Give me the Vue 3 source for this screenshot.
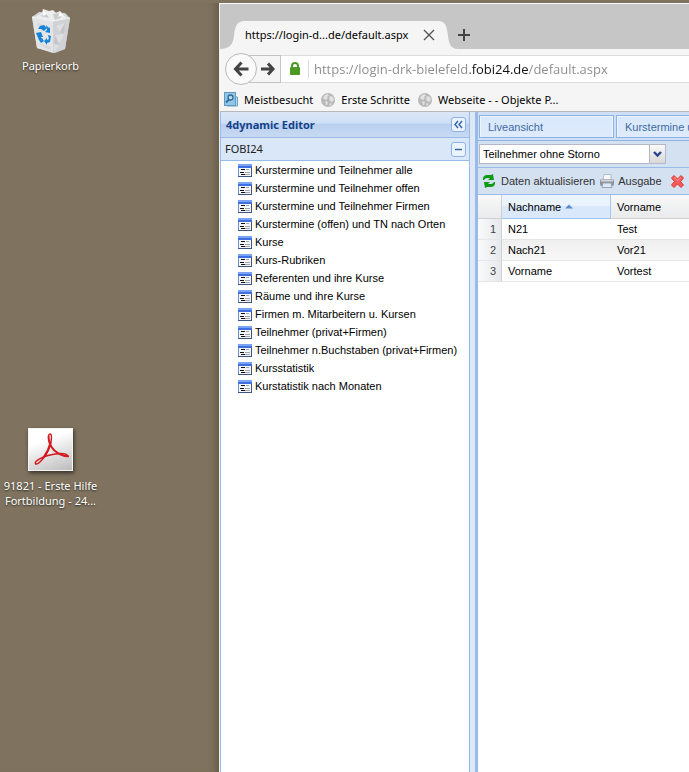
<script setup>
import { ref } from 'vue'

const address = ref('https://login-drk-bielefeld.fobi24.de/default.aspx')
const view = ref('Teilnehmer ohne Storno')
const entries = [
  'Kurstermine und Teilnehmer alle',
  'Kurstermine und Teilnehmer offen',
  'Kurstermine und Teilnehmer Firmen',
  'Kurstermine (offen) und TN nach Orten',
  'Kurse',
  'Kurs-Rubriken',
  'Referenten und ihre Kurse',
  'Räume und ihre Kurse',
  'Firmen m. Mitarbeitern u. Kursen',
  'Teilnehmer (privat+Firmen)',
  'Teilnehmer n.Buchstaben (privat+Firmen)',
  'Kursstatistik',
  'Kurstatistik nach Monaten'
]
const bookmarks = ['Erste Schritte', 'Webseite - - Objekte P...']
const people = [
  { last: 'N21', first: 'Test' },
  { last: 'Nach21', first: 'Vor21' },
  { last: 'Vorname', first: 'Vortest' }
]
</script>

<template>
  <div class="desktop">
    <div class="shortcuts">
      <a class="shortcut bin" href="#">
        <svg width="44" height="46" viewBox="0 0 44 46">
          <path d="M3 9 L10 4 L36 5 L41 10 L36 41 L26 45 L8 40 Z" fill="#d3d5d8" />
          <path d="M3 9 L24 13 L24 45 L8 40 Z" fill="#e3e4e6" />
          <path d="M24 13 L41 10 L36 41 L24 45 Z" fill="#d0d2d5" />
          <path d="M6 9 L13 5 L14 1 L20 3 L24 2 L27 5 L31 3 L34 6 L38 10 L25 13 Z" fill="#eceded" />
          <path d="M11 8 L17 5 L20 10 Z M24 6 L31 5 L32 10 L26 12 Z" fill="#c9cbcd" />
          <path d="M14 2 L18 6 L14 8 Z M31 4 L34 7 L29 9 Z" fill="#fff" />
          <path d="M27 18 L36 15 L31 24 Z M26 27 L35 26 L30 36 Z M25 36 L30 38 L25 44 Z" fill="#dddfe1" />
          <path d="M31 24 L36 15 L35 26 Z M26 27 L30 36 L25 36 Z" fill="#c3c6c9" />
          <path d="M8 15 L15 17 L10 20 Z M9 35 L22 39 L22 43 Z" fill="#d6d8da" />
          <path d="M3 9 L24 13 L41 10" fill="none" stroke="#f3f3f3" />
          <g fill="#1583d8">
            <path d="M9 21 L11 18 L15 17 L18 20 L15 23 L12 21 Z" />
            <path d="M7 25 L12 24 L14 29 L12 29 L13 32 L10 32 Z" />
            <path d="M13 30 L15 33 L12 35 L10 32 Z" />
            <path d="M17 17 L20 20 L21 19 L21 25 L16 24 L18 22 Z" />
            <path d="M19 27 L22 28 L21 34 L18 35 L18 37 L15 33 L18 30 L18 32 L20 31 Z" />
          </g>
        </svg>
        <span>Papierkorb</span>
      </a>
      <a class="shortcut pdf" href="#">
        <span class="paper">
          <svg width="43" height="41" viewBox="0 0 44 42" fill="none" stroke="#d3181e" stroke-linejoin="round" stroke-linecap="round">
            <path d="M20 8 Q20 5 22 5 Q24 6 22 16 Q19 26 12 33 Q9 36 7 36 Q5 34 10 31 Q18 26 32 25 Q39 25 40 28" stroke-width="1.500" />
            <path d="M20 8 Q20 16 26 22 Q33 28 40 28 M22 14 Q20 22 15 29" stroke-width="2" />
          </svg>
        </span>
        <span>91821 - Erste Hilfe Fortbildung - 24...</span>
      </a>
    </div>

    <main class="window">
      <div class="tabstrip">
        <div class="tab">
          <svg width="25" height="28" viewBox="0 0 25 28"><path d="M0 28 C10 28 13 23 14 15 C15 5 17 0 25 0 V28 Z" fill="#f5f5f5" /></svg>
          <div class="tab-body">
            <span class="tab-title">https://login-d...de/default.aspx</span>
            <button class="plain" aria-label="Tab schließen">
              <svg width="12" height="12" viewBox="0 0 12 12"><path d="M1 1 L11 11 M11 1 L1 11" stroke="#555" stroke-width="1.4" /></svg>
            </button>
          </div>
          <svg width="20" height="28" viewBox="0 0 20 28"><path d="M20 28 C13 28 11 23 10 15 C9 5 7 0 0 0 V28 Z" fill="#f5f5f5" /></svg>
        </div>
        <button class="plain new-tab" aria-label="Neuer Tab">
          <svg width="12" height="12" viewBox="0 0 12 12"><path d="M6 0 V12 M0 6 H12" stroke="#444" stroke-width="2" /></svg>
        </button>
      </div>

      <nav class="navbar">
        <button class="back" aria-label="Zurück">
          <svg width="16" height="16" viewBox="0 0 16 16" fill="none" stroke="#444" stroke-width="3"><path d="M8.500 1.500 L2.500 8 L8.500 14.500 M3 8 H15.500" /></svg>
        </button>
        <button class="forward" aria-label="Vor">
          <svg width="14" height="14" viewBox="0 0 14 14" fill="none" stroke="#444" stroke-width="3"><path d="M7 1.500 L12 7 L7 12.500 M11 7 H0" /></svg>
        </button>
        <div class="location">
          <svg width="10" height="13" viewBox="0 0 10 13"><rect y="5" width="10" height="8" rx="1" fill="#4a9a24" /><path d="M2 6 V4 Q2 1 5 1 Q8 1 8 4 V6" fill="none" stroke="#4a9a24" stroke-width="2" /></svg>
          <input v-model="address" type="text" aria-label="Adresse" spellcheck="false" />
        </div>
      </nav>

      <nav class="bookmarks">
        <a href="#">
          <svg width="14" height="15" viewBox="0 0 14 15"><path d="M11 5 H13.500 V14 H3" fill="#b8dcee" stroke="#6ea3c6" /><rect x=".5" y=".5" width="11" height="13" fill="#93c5e4" stroke="#5f9ac2" /><circle cx="6.500" cy="5.500" r="2.500" fill="#b9dcf0" stroke="#2f6c9a" stroke-width="1.300" /><path d="M5 7.500 L2 10.500" stroke="#2f6c9a" stroke-width="1.800" /></svg>
          <span>Meistbesucht</span>
        </a>
        <a v-for="b in bookmarks" :key="b" href="#">
          <svg width="14" height="14" viewBox="0 0 14 14"><circle cx="7" cy="7" r="7" fill="#b9b9b9" /><path d="M2 5 Q3 2 6 1 L8 2 L6 4 L7 5 L5 7 L3 6 Z M4 8 L7 9 L6 12 L5 12 Z M9 3 L12 4 L13 7 L11 9 L9 8 L8 5 Z M9 10 L11 11 L8 13 Z" fill="#e2e2e2" /></svg>
          <span>{{ b }}</span>
        </a>
      </nav>

      <div class="app">
        <aside class="sidebar">
          <header class="editor-head">
            <h1>4dynamic Editor</h1>
            <button class="tool" aria-label="Einklappen">
              <svg width="9" height="9" viewBox="0 0 9 9" fill="none" stroke="#2f62a5" stroke-width="1.400"><path d="M4 1 L1 4.500 L4 8 M8 1 L5 4.500 L8 8" /></svg>
            </button>
          </header>
          <div class="group-head">
            <h2>FOBI24</h2>
            <button class="tool" aria-label="Gruppe schließen">
              <svg width="9" height="9" viewBox="0 0 9 9"><path d="M1 4.500 H8" stroke="#2f62a5" stroke-width="1.400" /></svg>
            </button>
          </div>
          <ul>
            <li v-for="e in entries" :key="e">
              <a href="#">
                <svg width="14" height="13" viewBox="0 0 14 13" shape-rendering="crispEdges">
                  <rect width="14" height="13" fill="#6f8fc4" />
                  <rect x="1" y="4" width="12" height="8" fill="#f3f6fb" />
                  <rect width="14" height="2" fill="#7ba3f5" />
                  <rect y="2" width="14" height="2" fill="#3f6fe0" />
                  <rect y="12" width="14" height="1" fill="#3d5585" />
                  <rect x="13" y="4" width="1" height="9" fill="#3d5585" />
                  <rect x="3" y="5" width="4" height="1" fill="#111" />
                  <rect x="2" y="8" width="4" height="1" fill="#111" />
                  <rect x="3" y="10" width="4" height="1" fill="#111" />
                  <rect x="8" y="5" width="3" height="1" fill="#a5a5a5" />
                  <rect x="7" y="8" width="5" height="1" fill="#a5a5a5" />
                  <rect x="7" y="10" width="5" height="1" fill="#a5a5a5" />
                </svg>
                <span>{{ e }}</span>
              </a>
            </li>
          </ul>
        </aside>

        <section class="content">
          <div class="panel-tabs">
            <button>Liveansicht</button>
            <button>Kurstermine u</button>
          </div>
          <div class="filter">
            <div class="combo">
              <select v-model="view" aria-label="Ansicht"><option>Teilnehmer ohne Storno</option></select>
              <svg width="17" height="19" viewBox="0 0 17 19" aria-hidden="true"><defs><linearGradient id="trigger" x2="0" y2="1"><stop stop-color="#fafafa" /><stop offset="1" stop-color="#d6d6d6" /></linearGradient></defs><rect width="17" height="19" fill="url(#trigger)" /><path d="M.5 0 V18.500 H16.500 V0" fill="none" stroke="#b5b8c8" /><path d="M5 7 L8.500 10.500 L12 7" fill="none" stroke="#27478c" stroke-width="2.400" /></svg>
            </div>
          </div>
          <div class="actions">
            <button class="refresh">
              <svg width="12" height="14" viewBox="0 0 12 14" fill="#0f9a14"><path d="M0 6 V4 Q1 1 4 1 H8 L10 0 L11 6 H5 L7 4 H4 Q2 4 1 6 Z" /><path d="M12 8 V10 Q11 13 8 13 H4 L2 14 L1 8 H7 L5 10 H8 Q10 10 11 8 Z" /></svg>
              <span>Daten aktualisieren</span>
            </button>
            <button>
              <svg width="14" height="14" viewBox="0 0 14 14"><path d="M3 6 L4 .5 H11 V6" fill="#f5f8fc" stroke="#b4bbc5" /><rect y="5" width="14" height="7" rx="2" fill="#8d9299" /><path d="M1 6.500 H13" stroke="#d5d8dc" stroke-width="2" /><path d="M3 9 H11 L12 13.500 H2 Z" fill="#dbe9fb" stroke="#9aa6b6" /></svg>
              <span>Ausgabe</span>
            </button>
            <button class="delete" aria-label="Löschen">
              <svg width="13" height="13" viewBox="0 0 13 13"><path d="M3 .5 L6.500 4 L10 .5 L12.500 3 L9.500 6.500 L12.500 10 L10 12.500 L6.500 9 L3 12.500 L.5 10 L3.500 6.500 L.5 3 Z" fill="#f45c5c" stroke="#dc3434" /><path d="M3 2.500 L6.500 5.500 L10 2.500" fill="none" stroke="#ff9c93" /></svg>
            </button>
          </div>
          <table>
            <thead>
              <tr>
                <th class="num"></th>
                <th class="last sorted" aria-sort="ascending"><span class="label">Nachname <svg width="8" height="5" viewBox="0 0 8 5"><path d="M0 4.500 L4 .5 L8 4.500 Z" fill="#5c8bce" /></svg></span></th>
                <th>Vorname</th>
              </tr>
            </thead>
            <tbody>
              <tr v-for="(p, i) in people" :key="p.last">
                <td class="num">{{ i + 1 }}</td>
                <td>{{ p.last }}</td>
                <td>{{ p.first }}</td>
              </tr>
            </tbody>
          </table>
        </section>
      </div>
    </main>
  </div>
</template>

<style>
body { margin: 0; background: #7f735f; }
</style>

<style scoped>
* { box-sizing: border-box; }
svg { display: block; flex: none; }
a { color: inherit; text-decoration: none; }
button { margin: 0; font: inherit; color: inherit; flex: none; }
.desktop {
  display: flex;
  min-height: 100vh;
  padding-top: 3px;
  overflow: hidden;
  background: #7f735f;
  font: 11px/18px "Liberation Sans", Arial, sans-serif;
}
.shortcuts { position: relative; flex: none; width: 219px; box-shadow: inset -8px 0 8px -6px rgba(50, 40, 25, 0.4); }
.shortcut {
  position: absolute;
  left: 0;
  display: flex;
  flex-direction: column;
  align-items: center;
  width: 101px;
  color: #fff;
  font: 11px/15px "Noto Sans", sans-serif;
  text-align: center;
  text-shadow: 0 1px 2px rgba(0, 0, 0, 0.7);
}
.bin { top: 5px; gap: 4px; }
.pdf { top: 425px; gap: 7px; }
.paper { border: 1px solid #f4f4f4; background: linear-gradient(160deg, #fff 30%, #bcbcbc); box-shadow: 1px 2px 4px rgba(0, 0, 0, 0.6); }
.window {
  display: flex;
  flex-direction: column;
  flex: 1;
  min-width: 0;
  border-top: 1px solid #fbfbfb;
  border-left: 1px solid #f0f0f0;
  background: #f5f5f5;
}
.plain { display: flex; padding: 0; border: 0; background: none; }
.tabstrip { display: flex; align-items: flex-end; height: 45px; background: #c6c6c6; }
.tab { display: flex; }
.tab-body { display: flex; align-items: center; gap: 8px; width: 193px; height: 28px; background: #f5f5f5; }
.tab-title { flex: none; width: 170px; color: #000; font: 11px/16px "Noto Sans", sans-serif; white-space: nowrap; }
.new-tab { margin-bottom: 8px; }
.navbar { display: flex; align-items: center; height: 39px; padding-left: 5px; }
.back { z-index: 1; display: grid; place-items: center; width: 32px; height: 32px; padding: 0; border: 1px solid #bbb; border-radius: 50%; background: #fafafa; }
.forward { display: flex; align-items: center; justify-content: flex-end; width: 32px; height: 28px; margin-left: -8px; padding: 0 5px 0 0; border: 1px solid #c4c4c4; background: #f5f5f5; }
.location { display: flex; align-items: center; flex: 1; min-width: 0; height: 28px; padding-left: 9px; border: solid #dcdcdc; border-width: 1px 0; background: #fff; }
.location input {
  flex: 1;
  min-width: 0;
  height: 18px;
  margin-left: 8px;
  padding: 0 0 0 5px;
  border: 0;
  border-left: 1px solid #d8d8d8;
  outline: 0;
  background: linear-gradient(90deg, #8a8a8a 161px, #111 161px 219px, #8a8a8a 219px);
  background-clip: text;
  color: transparent;
  caret-color: #111;
  font: 13px/18px "Open Sans", sans-serif;
}
.bookmarks { display: flex; align-items: center; gap: 8px; height: 23px; padding-left: 4px; overflow: hidden; color: #000; font: 11px/16px "Noto Sans", sans-serif; white-space: nowrap; }
.bookmarks a { display: flex; align-items: center; gap: 6px; }
.app { display: flex; flex: 1; border-top: 1px solid #b8b8b8; background: #dfe8f6; }
.sidebar { flex: none; width: 250px; border: solid #99bbe8; border-width: 0 1px; background: #fff; }
.editor-head, .group-head { display: flex; align-items: center; justify-content: space-between; padding: 0 3px 0 5px; border-bottom: 1px solid #99bbe8; }
.editor-head { height: 26px; background: linear-gradient(#dbe7f7, #cedff5 45%, #b8cfee 48%, #c8daf3); }
.group-head { height: 23px; padding-left: 4px; background: #d9e7f8; }
h1, h2 { margin: 0; font: bold 11px/16px "Noto Sans", Tahoma, sans-serif; color: #15428b; }
h2 { font-weight: normal; color: #222; }
.tool { display: grid; place-items: center; width: 15px; height: 15px; padding: 0; border: 1px solid #8db2e3; border-radius: 3px; background: #eaf3fe; }
ul { margin: 0; padding: 0; list-style: none; }
li a { display: flex; align-items: center; gap: 3px; height: 18px; padding-left: 17px; color: #000; white-space: nowrap; }
.content { flex: 1; min-width: 0; margin-left: 5px; border-left: 3px solid #99bbe8; background: #fff; overflow: hidden; }
.panel-tabs { display: flex; gap: 2px; height: 29px; padding: 3px 1px 2px; border-bottom: 1px solid #8db2e3; background: #cfdff5; }
.panel-tabs button { width: 135px; padding: 0 8px; border: 1px solid #8db2e3; background: linear-gradient(#d9e8fb, #deebfd); box-shadow: inset 1px 1px #edf5ff, inset -1px 0 #edf5ff; color: #416aa3; text-align: left; white-space: nowrap; }
.filter { display: flex; align-items: center; height: 27px; padding-left: 1px; border-bottom: 1px solid #99bbe8; background: #d3e1f1; }
.combo { position: relative; width: 187px; height: 20px; }
.combo select { width: 100%; height: 20px; padding: 0 20px 0 3px; border: 1px solid #b5b8c8; border-radius: 0; outline: 0; appearance: none; background: #fff; color: #000; font: inherit; }
.combo svg { position: absolute; top: 1px; right: 0; pointer-events: none; }
.actions { display: flex; align-items: center; gap: 5px; height: 27px; padding-left: 5px; border-bottom: 1px solid #99bbe8; background: #d3e1f1; color: #333; }
.actions button { display: flex; align-items: center; gap: 4px; padding: 0; border: 0; background: none; }
.actions .refresh { gap: 6px; }
.actions .delete { margin-left: 4px; }
table { width: 100%; border-collapse: separate; border-spacing: 0; table-layout: fixed; color: #000; }
th, td { height: 21px; padding: 0 6px; border-bottom: 1px solid #e6e6e6; font-weight: normal; line-height: 18px; text-align: left; }
th { height: 24px; border-right: 1px solid #d0d0d0; border-bottom-color: #d0d0d0; background: linear-gradient(#f9f9f9, #e9eaec); }
th:last-child { border-right: 0; }
th.last { width: 109px; }
th.sorted { border-color: #a3c5ee; background: linear-gradient(#ebf3fd 45%, #d9e8fb 50%); }
.label { display: flex; align-items: center; gap: 4px; }
.num { width: 24px; border-right: 1px solid #d0d0d0; }
td.num { padding: 0 5px 0 0; background: linear-gradient(90deg, #fafafa, #e6e8ec); color: #444; text-align: right; }
tbody tr:nth-child(even) td:not(.num) { background: linear-gradient(#efefef, #f8f8f8); }
</style>
